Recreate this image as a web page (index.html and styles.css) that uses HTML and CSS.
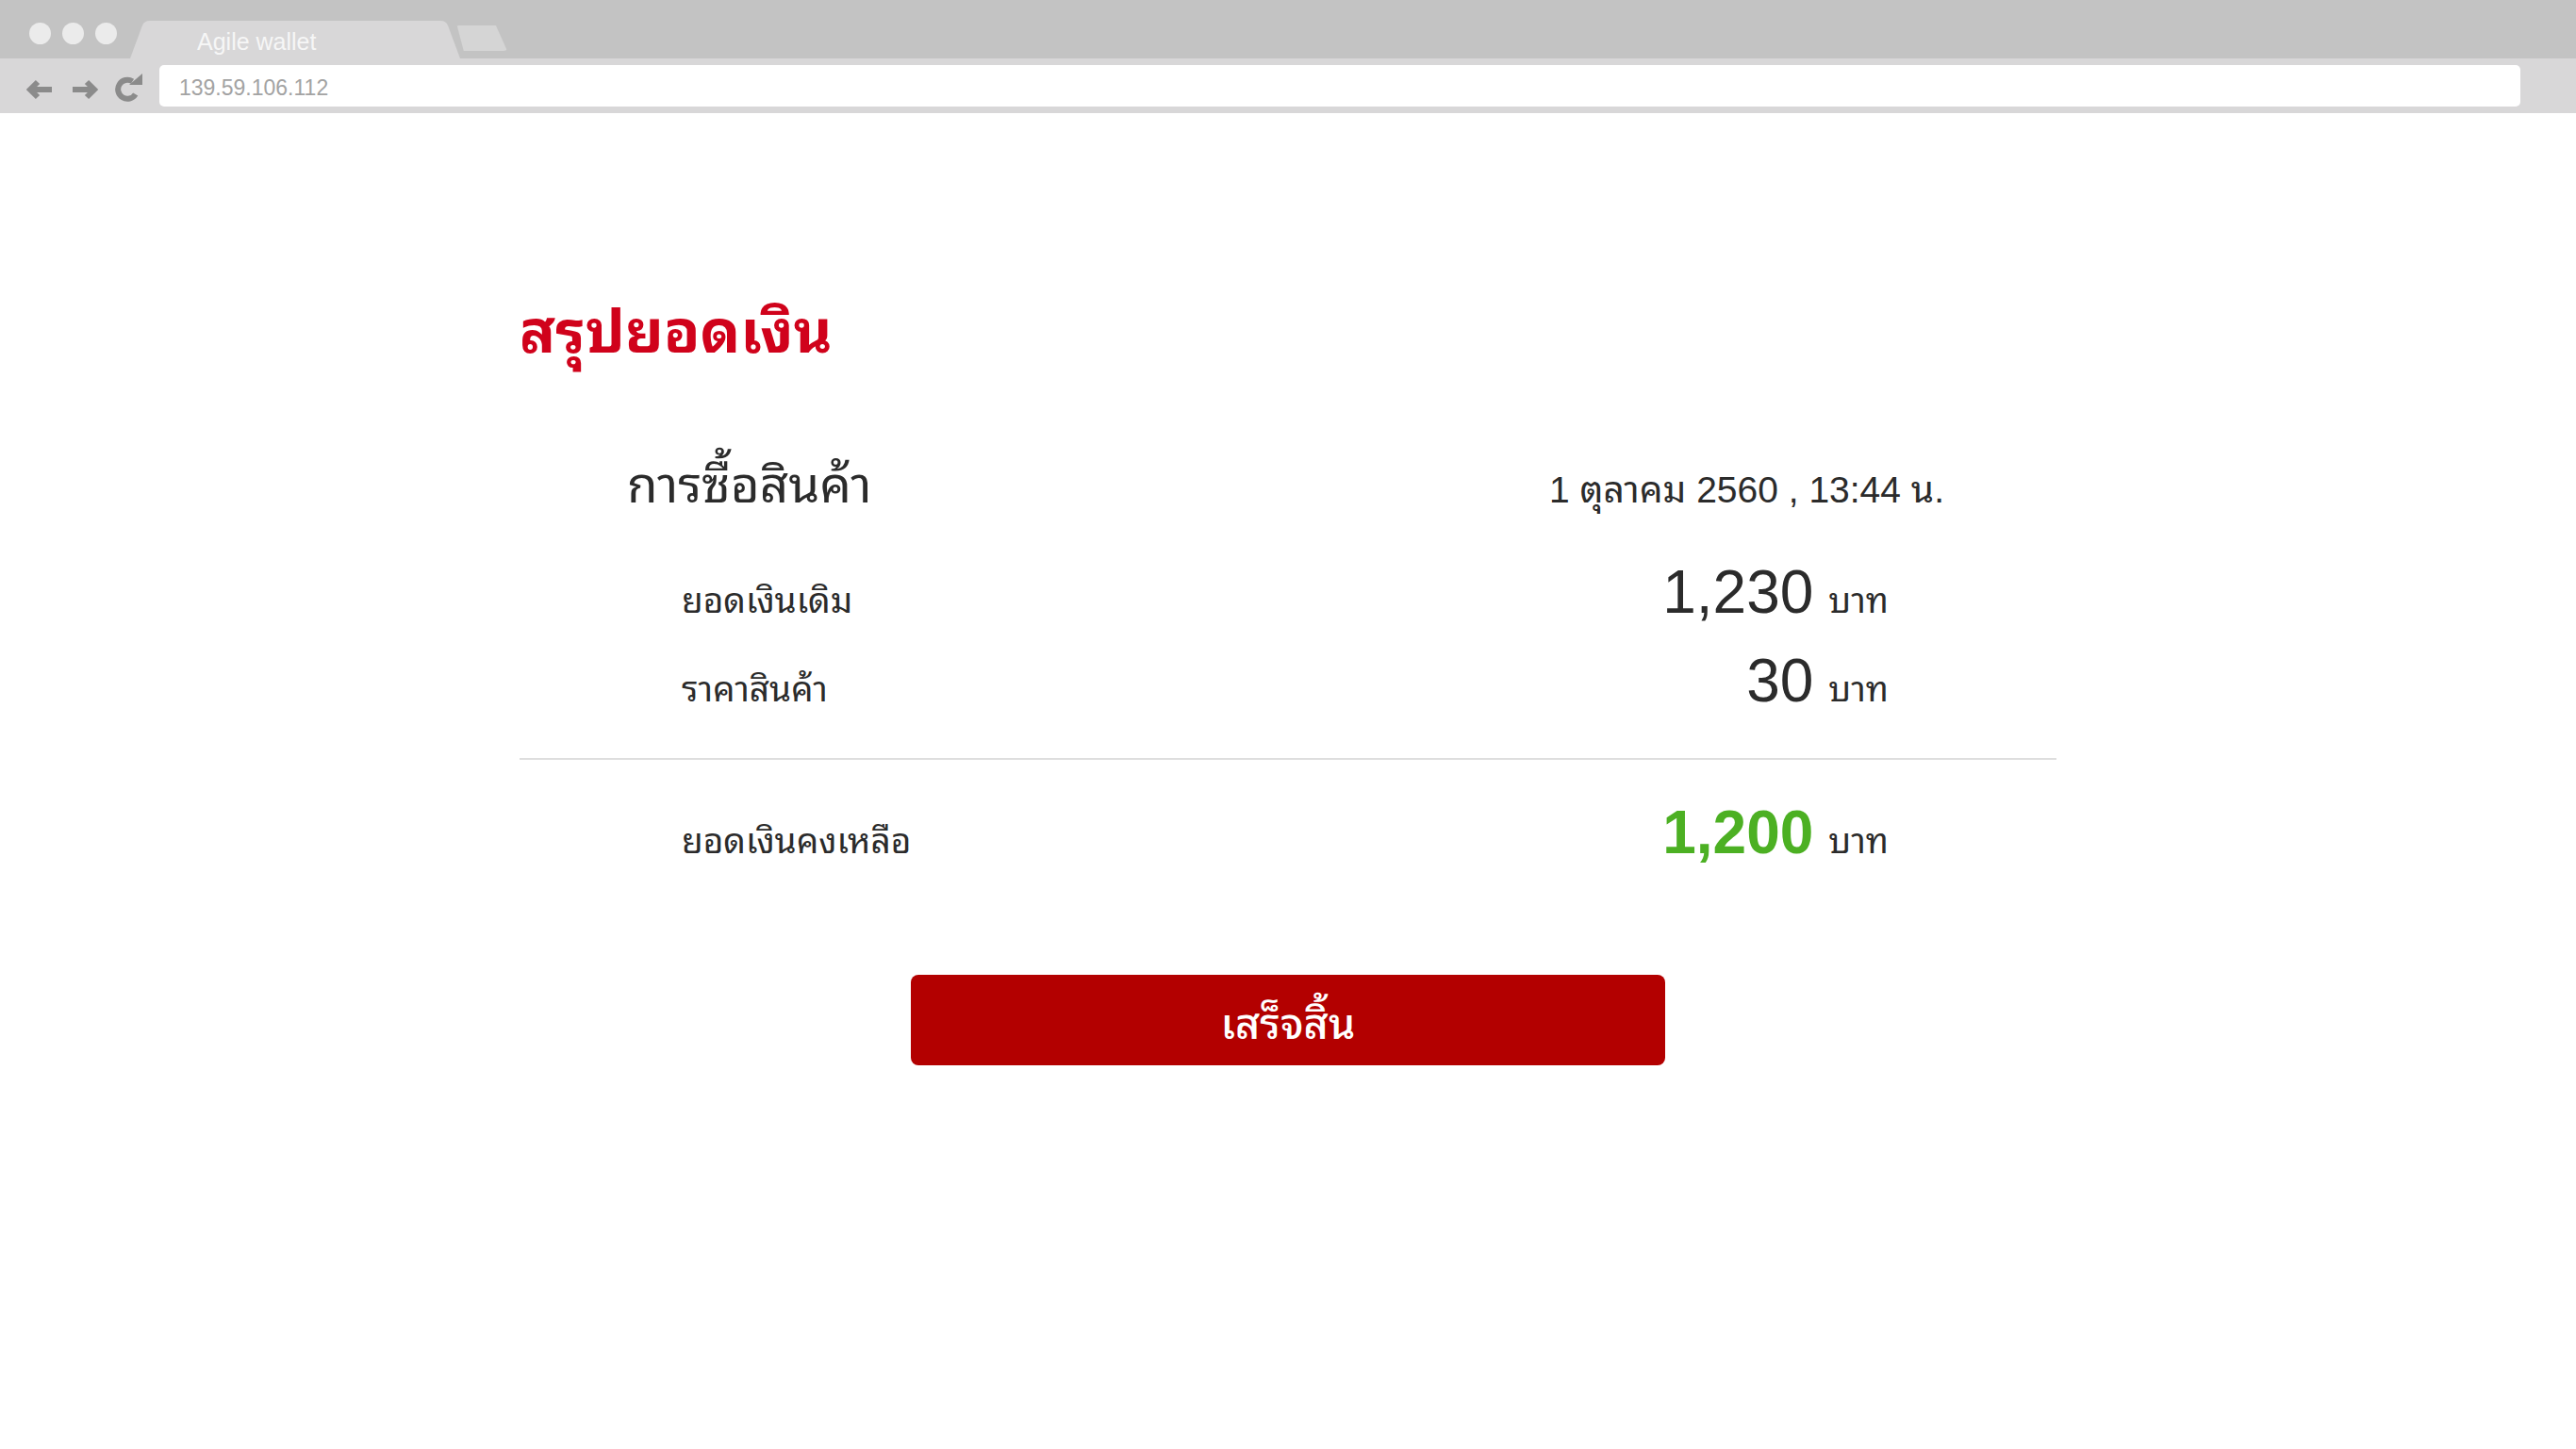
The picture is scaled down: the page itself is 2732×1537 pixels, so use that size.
FILE: index.html
```html
<!DOCTYPE html>
<html lang="th">
<head>
<meta charset="utf-8">
<title>Agile wallet</title>
<link rel="stylesheet" href="styles.css">
</head>
<body>
<div class="browser">
  <div class="titlebar">
    <div class="dots"><span class="dot"></span><span class="dot"></span><span class="dot"></span></div>
    <div class="tab"><span class="tab-title">Agile wallet</span></div>
    <div class="newtab"></div>
  </div>
  <div class="toolbar">
    <svg class="nav-icons" width="124" height="30" viewBox="0 0 124 30">
      <g fill="none" stroke="#8b8b8b" stroke-width="6">
        <path d="M27 17 H5 M12 9 L4 17 L12 25"/>
        <path d="M49 17 H71 M64 9 L72 17 L64 25"/>
        <path d="M112.5 8.3 A10 10 0 1 0 115.7 22"/>
      </g>
      <polygon points="109,12 123,12 123,0" fill="#8b8b8b"/>
    </svg>
    <div class="address">139.59.106.112</div>
  </div>
</div>

<main class="summary">
  <h1 class="title">สรุปยอดเงิน</h1>
  <div class="head-row">
    <span class="head-label">การซื้อสินค้า</span>
    <span class="date">1 ตุลาคม 2560 , 13:44 น.</span>
  </div>
  <div class="row row-first">
    <span class="label">ยอดเงินเดิม</span>
    <span class="amount"><span class="num">1,230</span><span class="unit">บาท</span></span>
  </div>
  <div class="row row-second">
    <span class="label">ราคาสินค้า</span>
    <span class="amount"><span class="num">30</span><span class="unit">บาท</span></span>
  </div>
  <div class="divider"></div>
  <div class="row row-total">
    <span class="label">ยอดเงินคงเหลือ</span>
    <span class="amount"><span class="num num-green">1,200</span><span class="unit">บาท</span></span>
  </div>
  <div class="actions">
    <button class="done" type="button">เสร็จสิ้น</button>
  </div>
</main>
</body>
</html>
```

FILE: styles.css
```css
html, body {
  margin: 0;
  padding: 0;
  background: #ffffff;
}

body {
  font-family: "Noto Sans Thai Looped", "Noto Sans Thai", "Noto Sans", "Liberation Sans", sans-serif;
  color: #2b2b2b;
}

/* ---------- browser chrome ---------- */
.titlebar {
  height: 62px;
  background: #c3c3c3;
  display: flex;
  align-items: flex-start;
}

.dots {
  display: flex;
  gap: 12px;
  margin: 24px 0 0 31px;
}

.dot {
  width: 23px;
  height: 23px;
  border-radius: 50%;
  background: #ebebeb;
}

.tab {
  margin: 22px 0 0 14px;
  width: 350px;
  height: 40px;
  background: #d8d7d8;
  clip-path: path('M0 40 L13 5 Q15 0 21 0 L329 0 Q335 0 337 5 L350 40 Z');
  box-sizing: border-box;
  padding: 2px 0 0 71px;
  font-family: "Liberation Sans", Arial, sans-serif;
  font-size: 25px;
  line-height: 40px;
  color: #f6f6f6;
}

.newtab {
  margin: 27px 0 0 -5px;
  width: 55px;
  height: 27px;
  background: #d5d5d5;
  clip-path: polygon(3% 0, 78% 0, 100% 100%, 16% 100%);
  border-radius: 4px;
}

.toolbar {
  height: 58px;
  background: #d8d7d8;
  display: flex;
  align-items: flex-start;
}

.nav-icons {
  display: block;
  margin: 16px 0 0 28px;
}

.address {
  margin: 7px 0 0 17px;
  width: 2504px;
  height: 44px;
  box-sizing: border-box;
  background: #ffffff;
  border-radius: 5px;
  padding: 4px 0 0 21px;
  font-family: "Liberation Sans", Arial, sans-serif;
  font-size: 23px;
  line-height: 40px;
  color: #a3a3a3;
}

/* ---------- summary ---------- */
.summary {
  width: 1630px;
  margin: 0 auto;
  padding-top: 186px;
}

.title {
  margin: 0;
  font-size: 63px;
  font-weight: 700;
  line-height: 80px;
  color: #d0021b;
}

.head-row {
  display: flex;
  justify-content: space-between;
  align-items: baseline;
  padding: 0 119px 0 114px;
  margin-top: 94px;
  line-height: 60px;
}

.head-label {
  font-size: 53px;
}

.date {
  font-family: "Liberation Sans", "Noto Sans Thai Looped", sans-serif;
  font-size: 39px;
}

.row {
  display: flex;
  justify-content: space-between;
  align-items: baseline;
  padding: 0 178px 0 172px;
  line-height: 93px;
}

.label {
  font-size: 37px;
}

.amount {
  display: flex;
  align-items: baseline;
  gap: 16px;
}

.num {
  font-family: "Liberation Sans", sans-serif;
  font-size: 64px;
}

.num-green {
  font-weight: 700;
  font-size: 64px;
  color: #4cb023;
}

.unit {
  font-size: 37px;
}

.row-first {
  margin-top: 32px;
}

.row-second {
  margin-top: -4px;
}

.divider {
  height: 2px;
  background: #dedede;
  margin-top: 30px;
}

.row-total {
  margin-top: 31px;
}

.actions {
  display: flex;
  justify-content: center;
  margin-top: 99px;
}

.done {
  width: 800px;
  height: 96px;
  border: none;
  border-radius: 8px;
  background: #b30000;
  color: #ffffff;
  font-family: "Noto Sans Thai Looped", "Noto Sans Thai", sans-serif;
  font-size: 45px;
  font-weight: 500;
  padding: 0;
}
```
